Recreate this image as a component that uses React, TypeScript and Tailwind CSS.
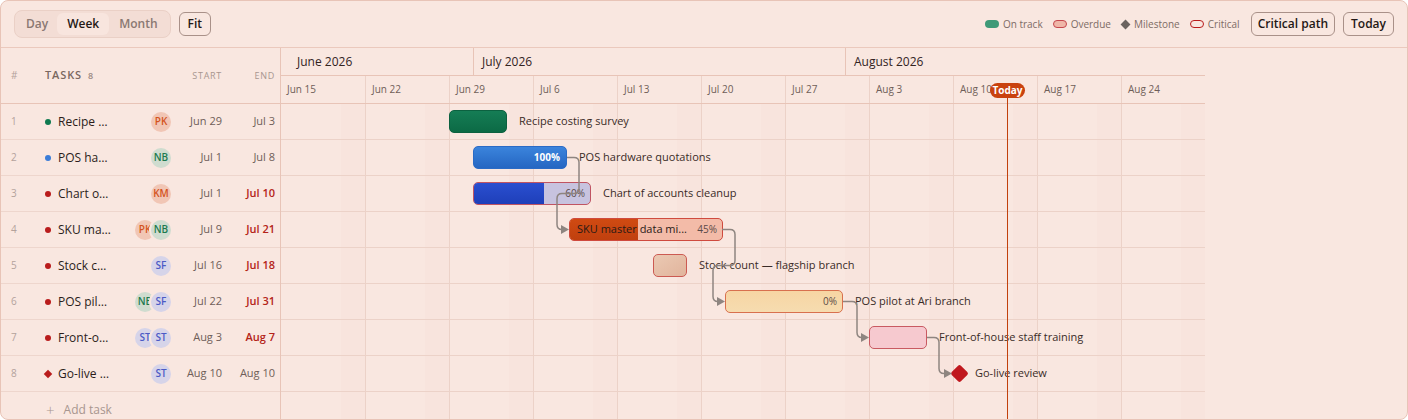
import React from "react";

type Task = {
  n: number;
  name: string;
  dot: string;
  diamond?: boolean;
  avatars: string[];
  start: string;
  end: string;
  overdue: boolean;
  startDay: number;
  days: number;
};

const tasks: Task[] = [
  { n: 1, name: "Recipe costing survey", dot: "bg-[#0f7a50]", avatars: ["PK"], start: "Jun 29", end: "Jul 3", overdue: false, startDay: 14, days: 5 },
  { n: 2, name: "POS hardware quotations", dot: "bg-[#3b7dd8]", avatars: ["NB"], start: "Jul 1", end: "Jul 8", overdue: false, startDay: 16, days: 8 },
  { n: 3, name: "Chart of accounts cleanup", dot: "bg-[#b91c1c]", avatars: ["KM"], start: "Jul 1", end: "Jul 10", overdue: true, startDay: 16, days: 10 },
  { n: 4, name: "SKU master data migration", dot: "bg-[#b91c1c]", avatars: ["PK", "NB"], start: "Jul 9", end: "Jul 21", overdue: true, startDay: 24, days: 13 },
  { n: 5, name: "Stock count — flagship branch", dot: "bg-[#b91c1c]", avatars: ["SF"], start: "Jul 16", end: "Jul 18", overdue: true, startDay: 31, days: 3 },
  { n: 6, name: "POS pilot at Ari branch", dot: "bg-[#b91c1c]", avatars: ["NB", "SF"], start: "Jul 22", end: "Jul 31", overdue: true, startDay: 37, days: 10 },
  { n: 7, name: "Front-of-house staff training", dot: "bg-[#b91c1c]", avatars: ["ST", "ST"], start: "Aug 3", end: "Aug 7", overdue: true, startDay: 49, days: 5 },
  { n: 8, name: "Go-live review", dot: "bg-[#b91c1c]", diamond: true, avatars: ["ST"], start: "Aug 10", end: "Aug 10", overdue: false, startDay: 56, days: 1 },
];

const avatarStyle: Record<string, string> = {
  PK: "bg-[#f1c6b5] text-[#d4531d]",
  KM: "bg-[#f1c6b5] text-[#d4531d]",
  NB: "bg-[#cfdccf] text-[#1d7a4e]",
  SF: "bg-[#d6d4e9] text-[#4b5ac6]",
  ST: "bg-[#d6d4e9] text-[#4b5ac6]",
};

const weeks = ["Jun 15", "Jun 22", "Jun 29", "Jul 6", "Jul 13", "Jul 20", "Jul 27", "Aug 3", "Aug 10", "Aug 17", "Aug 24"];

const DAY = 12;

function Avatar({ code, ring }: { code: string; ring?: boolean }) {
  return (
    <div
      className={
        "w-[20px] h-[20px] rounded-full flex items-center justify-center text-[10px] font-semibold shrink-0 " +
        avatarStyle[code] +
        (ring ? " -ml-[4px] ring-2 ring-[#f9e7e0]" : "")
      }
    >
      {code}
    </div>
  );
}

function roundedPath(pts: [number, number][], r: number) {
  let d = `M ${pts[0][0]} ${pts[0][1]}`;
  for (let i = 1; i < pts.length - 1; i++) {
    const [px, py] = pts[i - 1];
    const [cx, cy] = pts[i];
    const [nx, ny] = pts[i + 1];
    const l1 = Math.hypot(cx - px, cy - py);
    const l2 = Math.hypot(nx - cx, ny - cy);
    const rr = Math.min(r, l1 / 2, l2 / 2);
    const ax = cx - ((cx - px) / l1) * rr;
    const ay = cy - ((cy - py) / l1) * rr;
    const bx = cx + ((nx - cx) / l2) * rr;
    const by = cy + ((ny - cy) / l2) * rr;
    d += ` L ${ax} ${ay} Q ${cx} ${cy} ${bx} ${by}`;
  }
  const last = pts[pts.length - 1];
  d += ` L ${last[0] - 6} ${last[1]}`;
  return d;
}

const links: [number, number][][] = [
  [[286, 53.5], [298, 53.5], [298, 89.5], [276, 89.5], [276, 125.5], [288, 125.5]],
  [[441, 125.5], [454, 125.5], [454, 161.5], [432, 161.5], [432, 197.5], [444, 197.5]],
  [[562, 197.5], [576, 197.5], [576, 233.5], [588, 233.5]],
  [[646, 233.5], [658, 233.5], [658, 269.5], [671, 269.5]],
];

const labelCls = "absolute top-0 h-full flex items-center text-[11px] text-[#3a2b27] whitespace-nowrap";

function Bar({ t, idx }: { t: Task; idx: number }) {
  const left = t.startDay * DAY;
  const width = t.days * DAY - 2;
  const labelLeft = left + width + 12;
  const label = (
    <div className={labelCls} style={{ left: labelLeft }}>
      {t.name}
    </div>
  );
  if (idx === 0) {
    return (
      <>
        <div className="absolute top-[6px] h-[23px] rounded-[5px] bg-gradient-to-b from-[#157d55] to-[#0c6a45] border border-[#0c6140]" style={{ left, width }} />
        {label}
      </>
    );
  }
  if (idx === 1) {
    return (
      <>
        <div className="absolute top-[6px] h-[23px] rounded-[5px] bg-gradient-to-b from-[#3b84dc] to-[#2566c2] border border-[#2a6bc6] flex items-center justify-end pr-[6px]" style={{ left, width }}>
          <span className="text-[10px] font-bold text-white">100%</span>
        </div>
        {label}
      </>
    );
  }
  if (idx === 2) {
    return (
      <>
        <div className="absolute top-[6px] h-[23px] rounded-[5px] bg-[#c7c3df] border border-[#c05462] overflow-hidden flex items-center justify-end pr-[5px]" style={{ left, width }}>
          <div className="absolute left-0 top-0 bottom-0 w-[60%] bg-gradient-to-b from-[#2a4fd0] to-[#1f3fb9]" />
          <span className="relative text-[10px] text-[#5a4a48]">60%</span>
        </div>
        {label}
      </>
    );
  }
  if (idx === 3) {
    return (
      <div className="absolute top-[6px] h-[23px] rounded-[5px] bg-[#f3bba8] border border-[#cf4a3e] overflow-hidden flex items-center pl-[7px] pr-[5px]" style={{ left, width }}>
        <div className="absolute left-0 top-0 bottom-0 w-[45%] bg-gradient-to-b from-[#d04a12] to-[#c0400e]" />
        <span className="relative text-[11px] text-[#2a1a16] truncate flex-1 min-w-0">SKU master data mi...</span>
        <span className="relative text-[10px] text-[#5a4a48] ml-[8px] shrink-0">45%</span>
      </div>
    );
  }
  if (idx === 4) {
    return (
      <>
        <div className="absolute top-[6px] h-[23px] rounded-[5px] bg-gradient-to-br from-[#ebc9b3] to-[#e1b49c] border border-[#cc5a52]" style={{ left, width }} />
        {label}
      </>
    );
  }
  if (idx === 5) {
    return (
      <>
        <div className="absolute top-[6px] h-[23px] rounded-[5px] bg-gradient-to-b from-[#f7d5a3] to-[#f6dcb0] border border-[#d8704e] flex items-center justify-end pr-[5px]" style={{ left, width }}>
          <span className="text-[10px] text-[#5a4a48]">0%</span>
        </div>
        {label}
      </>
    );
  }
  if (idx === 6) {
    return (
      <>
        <div className="absolute top-[6px] h-[23px] rounded-[5px] bg-[#f6c9cf] border border-[#c95a62]" style={{ left, width }} />
        {label}
      </>
    );
  }
  return (
    <>
      <div className="absolute top-[11px] w-[13px] h-[13px] rotate-45 rounded-[2px] bg-[#c0181e]" style={{ left }} />
      <div className={labelCls} style={{ left: left + 22 }}>
        {t.name}
      </div>
    </>
  );
}

export default function App() {
  return (
    <div className="w-[1408px] h-[420px] bg-[#f9e7e0] border border-[#e8c4b7] rounded-lg overflow-hidden flex flex-col font-['Open_Sans','Noto_Sans',sans-serif] text-[#2b1d1a]">
      {/* Toolbar */}
      <div className="h-[47px] shrink-0 flex items-center justify-between pl-[13px] pr-[13px] border-b border-[#ebc9bd]">
        <div className="flex items-center gap-[8px]">
          <div className="flex items-center h-[28px] px-[2px] rounded-[8px] bg-[#f3ddd5] border border-[#ead0c6]">
            <div className="h-[22px] px-[9px] flex items-center text-[12px] font-semibold text-[#8a7872] rounded-[6px]">Day</div>
            <div className="h-[22px] px-[10px] flex items-center text-[12px] font-semibold text-[#241815] rounded-[6px] bg-[#f8e5de]">Week</div>
            <div className="h-[22px] px-[10px] flex items-center text-[12px] font-semibold text-[#8a7872] rounded-[6px]">Month</div>
          </div>
          <div className="h-[24px] px-[8px] flex items-center rounded-[6px] border border-[#a99189] text-[12px] font-semibold text-[#241815]">Fit</div>
        </div>
        <div className="flex items-center">
          <div className="flex items-center gap-[10px] mr-[11px] text-[10px] text-[#7d6b65]">
            <div className="flex items-center gap-[4px]">
              <span className="w-[14px] h-[8px] rounded-full bg-[#3f9a78]" />
              <span>On track</span>
            </div>
            <div className="flex items-center gap-[4px]">
              <span className="w-[14px] h-[8px] rounded-full bg-[#efb6a8] border border-[#c5474d]" />
              <span>Overdue</span>
            </div>
            <div className="flex items-center gap-[4px]">
              <span className="w-[7px] h-[7px] rotate-45 bg-[#6b625e] mx-[1px]" />
              <span>Milestone</span>
            </div>
            <div className="flex items-center gap-[4px]">
              <span className="w-[14px] h-[8px] rounded-full border border-[#b91c1c]" />
              <span>Critical</span>
            </div>
          </div>
          <div className="h-[24px] px-[6px] flex items-center rounded-[6px] border border-[#a99189] text-[12px] font-semibold text-[#241815]">Critical path</div>
          <div className="h-[24px] px-[7px] ml-[8px] flex items-center rounded-[6px] border border-[#a99189] text-[12px] font-semibold text-[#241815]">Today</div>
        </div>
      </div>

      <div className="flex flex-1 min-h-0">
        {/* Left task list */}
        <div className="w-[280px] shrink-0 border-r border-[#e8c4b7] flex flex-col">
          <div className="h-[56px] shrink-0 border-b border-[#e8c4b7] flex items-center">
            <div className="w-[44px] pl-[10px] text-[10px] text-[#b3a29c]">#</div>
            <div className="w-[126px] flex items-baseline gap-[6px]">
              <span className="text-[11px] font-semibold tracking-[0.08em] text-[#7a6760]">TASKS</span>
              <span className="text-[9px] font-semibold text-[#9a8882]">8</span>
            </div>
            <div className="w-[51px] text-right text-[9px] tracking-[0.08em] text-[#a8968f]">START</div>
            <div className="w-[53px] text-right text-[9px] tracking-[0.08em] text-[#a8968f]">END</div>
          </div>
          {tasks.map((t) => (
            <div key={t.n} className="h-[36px] shrink-0 border-b border-[#eed6cd] flex items-center">
              <div className="w-[44px] pl-[10px] text-[10px] text-[#b3a29c]">{t.n}</div>
              <div className="w-[66px] flex items-center">
                {t.diamond ? (
                  <span className="w-[6px] h-[6px] rotate-45 bg-[#b91c1c] shrink-0" />
                ) : (
                  <span className={"w-[6px] h-[6px] rounded-full shrink-0 " + t.dot} />
                )}
                <span className="ml-[7px] text-[12px] text-[#2b1d1a] truncate w-[53px]">{t.name}</span>
              </div>
              <div className="w-[60px] flex items-center justify-end">
                {t.avatars.map((a, i) => (
                  <Avatar key={i} code={a} ring={i > 0} />
                ))}
              </div>
              <div className="w-[51px] text-right text-[11px] text-[#6f5e58]">{t.start}</div>
              <div className={"w-[53px] text-right text-[11px] " + (t.overdue ? "font-semibold text-[#b42318]" : "text-[#6f5e58]")}>{t.end}</div>
            </div>
          ))}
          <div className="h-[36px] shrink-0 flex items-center pl-[45px] text-[12px] text-[#a8968f] gap-[9px]">
            <span className="text-[15px] leading-none font-light">+</span>
            <span>Add task</span>
          </div>
        </div>

        {/* Timeline */}
        <div className="relative flex-1 min-w-0 flex flex-col">
          {/* Month row */}
          <div className="h-[28px] shrink-0 flex w-[924px] border-b border-[#e8c4b7]">
            <div className="w-[192px] pl-[16px] flex items-center text-[12px] font-medium text-[#33231f]">June 2026</div>
            <div className="w-[372px] pl-[8px] flex items-center text-[12px] font-medium text-[#33231f] border-l border-[#e8c4b7]">July 2026</div>
            <div className="w-[360px] pl-[8px] flex items-center text-[12px] font-medium text-[#33231f] border-l border-[#e8c4b7]">August 2026</div>
          </div>
          {/* Week row */}
          <div className="h-[28px] shrink-0 flex w-[924px] border-b border-[#e8c4b7]">
            {weeks.map((w, i) => (
              <div key={w} className={"w-[84px] pl-[6px] flex items-center text-[10px] text-[#6f5e58] " + (i > 0 ? "border-l border-[#ecd2c8]" : "")}>
                {w}
              </div>
            ))}
          </div>
          {/* Body */}
          <div className="relative flex-1 min-h-0 w-[924px]">
            <div className="absolute inset-0 flex">
              {weeks.map((w, i) => (
                <div key={w} className={"w-[84px] h-full flex justify-end " + (i > 0 ? "border-l border-[#ecd2c8]" : "")}>
                  <div className="w-[24px] h-full bg-[#d9a898]/[0.035]" />
                </div>
              ))}
            </div>
            <div className="relative flex flex-col">
              {tasks.map((t, i) => (
                <div key={t.n} className="relative h-[36px] shrink-0 border-b border-[#ecd2c8]">
                  <Bar t={t} idx={i} />
                </div>
              ))}
            </div>
            <svg className="absolute left-0 top-0 pointer-events-none" width="924" height="300">
              {links.map((p, i) => {
                const last = p[p.length - 1];
                return (
                  <g key={i}>
                    <path d={roundedPath(p, 5)} fill="none" stroke="#8e8580" strokeWidth="1.5" />
                    <polygon points={`${last[0]},${last[1]} ${last[0] - 8},${last[1] - 4.5} ${last[0] - 8},${last[1] + 4.5}`} fill="#8e8580" />
                  </g>
                );
              })}
            </svg>
          </div>
          {/* Today marker */}
          <div className="absolute top-[49px] bottom-0 left-[726px] w-px bg-[#c2410c]" />
          <div className="absolute top-[35px] left-[709px] h-[15px] w-[35px] rounded-full bg-[#c9420f] flex items-center justify-center text-[10px] font-bold text-white">
            Today
          </div>
        </div>
      </div>
    </div>
  );
}
